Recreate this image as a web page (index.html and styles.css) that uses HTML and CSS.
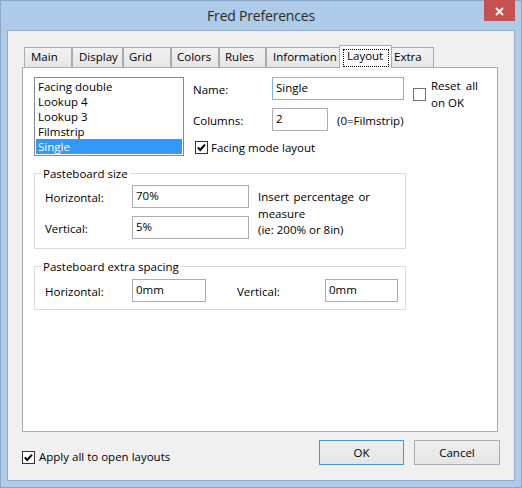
FILE: index.html
```html
<!DOCTYPE html>
<html lang="en">
<head>
<meta charset="utf-8">
<title>Fred Preferences</title>
<link rel="stylesheet" href="styles.css">
</head>
<body>
<div class="window">
  <div class="titlebar">
    <span class="title">Fred Preferences</span>
    <div class="close">
      <svg width="9" height="9" viewBox="0 0 9 9"><path d="M1 1 L8 8 M8 1 L1 8" stroke="#fff" stroke-width="1.8" fill="none"/></svg>
    </div>
  </div>
  <div class="client">
    <div class="tabs">
      <div class="tab t-main">Main</div>
      <div class="tab t-display">Display</div>
      <div class="tab t-grid">Grid</div>
      <div class="tab t-colors">Colors</div>
      <div class="tab t-rules">Rules</div>
      <div class="tab t-info">Information</div>
      <div class="tab t-layout selected"><span class="focus">Layout</span></div>
      <div class="tab t-extra">Extra</div>
    </div>
    <div class="panel">
      <div class="top">
        <ul class="list">
          <li>Facing double</li>
          <li>Lookup 4</li>
          <li>Lookup 3</li>
          <li>Filmstrip</li>
          <li class="sel">Single</li>
        </ul>
        <div class="form">
          <span class="lbl">Name:</span>
          <div class="field focused w-name">Single</div>
          <div class="reset">
            <svg class="cb" width="13" height="13" viewBox="0 0 13 13"><rect x="0.5" y="0.5" width="12" height="12" fill="#fff" stroke="#707070"/></svg>
            <span class="reset-text">Reset all on OK</span>
          </div>
          <span class="lbl">Columns:</span>
          <div class="cols-cell">
            <div class="field w-cols">2</div>
            <span class="hint">(0=Filmstrip)</span>
          </div>
          <div class="check facing">
            <svg class="cb" width="13" height="13" viewBox="0 0 13 13"><rect x="0.5" y="0.5" width="12" height="12" fill="#fff" stroke="#333"/><path d="M2.8 6.4 L5.2 9 L10 3.6" fill="none" stroke="#000" stroke-width="2"/></svg>
            <span>Facing mode layout</span>
          </div>
        </div>
      </div>

      <div class="group g-size">
        <span class="gtitle">Pasteboard size</span>
        <div class="grid-size">
          <span class="lbl">Horizontal:</span>
          <div class="field">70%</div>
          <p class="note">Insert percentage or measure<br>(ie: 200% or 8in)</p>
          <span class="lbl">Vertical:</span>
          <div class="field">5%</div>
        </div>
      </div>

      <div class="group g-extra">
        <span class="gtitle">Pasteboard extra spacing</span>
        <div class="grid-extra">
          <span class="lbl">Horizontal:</span>
          <div class="field">0mm</div>
          <span class="lbl lbl-v">Vertical:</span>
          <div class="field">0mm</div>
        </div>
      </div>
    </div>

    <div class="bottom">
      <div class="check apply">
        <svg class="cb" width="13" height="13" viewBox="0 0 13 13"><rect x="0.5" y="0.5" width="12" height="12" fill="#fff" stroke="#333"/><path d="M2.8 6.4 L5.2 9 L10 3.6" fill="none" stroke="#000" stroke-width="2"/></svg>
        <span>Apply all to open layouts</span>
      </div>
      <div class="buttons">
        <div class="btn default">OK</div>
        <div class="btn cancel">Cancel</div>
      </div>
    </div>
  </div>
</div>
</body>
</html>
```
FILE: styles.css
```css
* { box-sizing: border-box; }

html, body {
  margin: 0;
  padding: 0;
}

body {
  font-family: "Open Sans", "Noto Sans", sans-serif;
  font-size: 11.5px;
  color: #000;
  background: #aecbe8;
}

.window {
  position: relative;
  width: 522px;
  height: 488px;
  border: 1px solid #8aa6c9;
  background: #aecbe8;
  display: flex;
  flex-direction: column;
}

.titlebar {
  height: 29px;
  display: flex;
  align-items: center;
  justify-content: center;
}

.title {
  font-size: 14px;
  letter-spacing: -0.2px;
  color: #2b2b2b;
}

.close {
  position: absolute;
  top: -1px;
  right: 6px;
  width: 31px;
  height: 21px;
  background: #c75050;
  display: flex;
  align-items: center;
  justify-content: center;
  padding-top: 1px;
}

.client {
  flex: 1;
  margin: 0 6px 6px 6px;
  border: 1px solid #93accd;
  background: #f0f0f0;
  padding: 14px 14px 0 14px;
}

/* tabs */
.tabs {
  display: flex;
  align-items: flex-end;
  height: 22px;
  margin-left: 2px;
  position: relative;
  z-index: 1;
}

.tab {
  height: 20px;
  border: 1px solid #acacac;
  border-bottom: none;
  background: linear-gradient(#f2f2f2, #e6e6e6);
  line-height: 18px;
  padding-left: 5px;
  white-space: nowrap;
}

.t-main { width: 48px; padding-left: 6px; }
.t-display { width: 51px; padding-left: 6px; }
.t-grid { width: 48px; }
.t-colors { width: 48px; }
.t-rules { width: 47px; }
.t-info { width: 75px; padding-left: 6px; }
.t-layout { width: 49px; }
.t-extra { width: 44px; padding-left: 3px; }

.tab.selected {
  width: 53px;
  height: 23px;
  margin: 0 -2px -1px -2px;
  background: #fff;
  padding: 3px 2px 0 3px;
  position: relative;
  z-index: 2;
}

.focus {
  display: block;
  height: 18px;
  border: 1px dotted #000;
  padding-left: 3px;
  line-height: 12px;
}

/* panel */
.panel {
  width: 476px;
  height: 365px;
  border: 1px solid #acacac;
  background: #fff;
  padding: 9px 0 0 11px;
}

.top {
  display: flex;
  align-items: flex-start;
}

.list {
  list-style: none;
  margin: 0;
  width: 150px;
  height: 79px;
  border: 1px solid #828790;
  padding: 1px;
}

.list li {
  height: 15px;
  line-height: 15px;
  padding-left: 2px;
  white-space: nowrap;
}

.list li.sel {
  background: #3399ff;
  color: #fff;
}

.form {
  margin-left: 9px;
  display: grid;
  grid-template-columns: 79px 132px auto;
  grid-template-rows: 23px 23px auto;
  row-gap: 8px;
}

.lbl {
  align-self: start;
  padding-top: 5px;
  line-height: 15px;
  white-space: nowrap;
}

.field {
  height: 23px;
  border: 1px solid #abadb3;
  background: #fff;
  padding: 0 3px;
  line-height: 20px;
  white-space: nowrap;
}

.field.focused { border-color: #7eb4ea; }
.w-name { width: 132px; }
.w-cols { width: 56px; }

.reset {
  margin-left: 9px;
  margin-top: 1px;
  align-self: start;
  display: flex;
  align-items: center;
  height: 33px;
}

.reset-text {
  width: 47px;
  margin-left: 5px;
  line-height: 16.5px;
  text-align: justify;
}

.cb { display: block; flex: none; }

.cols-cell {
  grid-column: 2 / 4;
  display: flex;
  align-items: flex-start;
}

.hint {
  margin-left: 9px;
  padding-top: 5px;
  line-height: 15px;
  white-space: nowrap;
}

.check {
  display: flex;
  align-items: center;
  line-height: 15px;
  white-space: nowrap;
}

.check .cb { margin-right: 3px; }

.facing {
  grid-column: 1 / 4;
  margin-top: 1px;
  margin-left: 2px;
}

/* groups */
.group {
  width: 372px;
  border: 1px solid #dcdcdc;
  margin-top: 17px;
  padding: 0 0 9px 10px;
}

.gtitle {
  display: table;
  background: #fff;
  padding: 0 2px;
  margin: -8px 0 0 -4px;
  line-height: 15px;
}

.grid-size {
  margin-top: 4px;
  display: grid;
  grid-template-columns: 87px 117px auto;
  grid-template-rows: 23px 23px;
  row-gap: 8px;
}

.note {
  grid-column: 3;
  grid-row: 1 / 3;
  margin: 4px 0 0 9px;
  width: 112px;
  line-height: 16.5px;
  text-align: justify;
}

.g-extra { padding-bottom: 7px; }

.grid-extra {
  margin-top: 5px;
  display: grid;
  grid-template-columns: 87px 74px 119px 73px;
  grid-template-rows: 23px;
}

.lbl-v { padding-left: 31px; }

/* bottom */
.bottom {
  margin-top: 8px;
  height: 25px;
  display: flex;
  justify-content: space-between;
}

.apply {
  align-self: flex-end;
  line-height: 16px;
}

.apply .cb { margin-right: 4px; }

.buttons {
  display: flex;
  gap: 10px;
}

.btn {
  height: 25px;
  border: 1px solid #acacac;
  background: linear-gradient(#efefef, #e5e5e5);
  display: flex;
  align-items: center;
  justify-content: center;
}

.btn.default { width: 85px; border-color: #3c97f0; }
.btn.cancel { width: 86px; }
```
